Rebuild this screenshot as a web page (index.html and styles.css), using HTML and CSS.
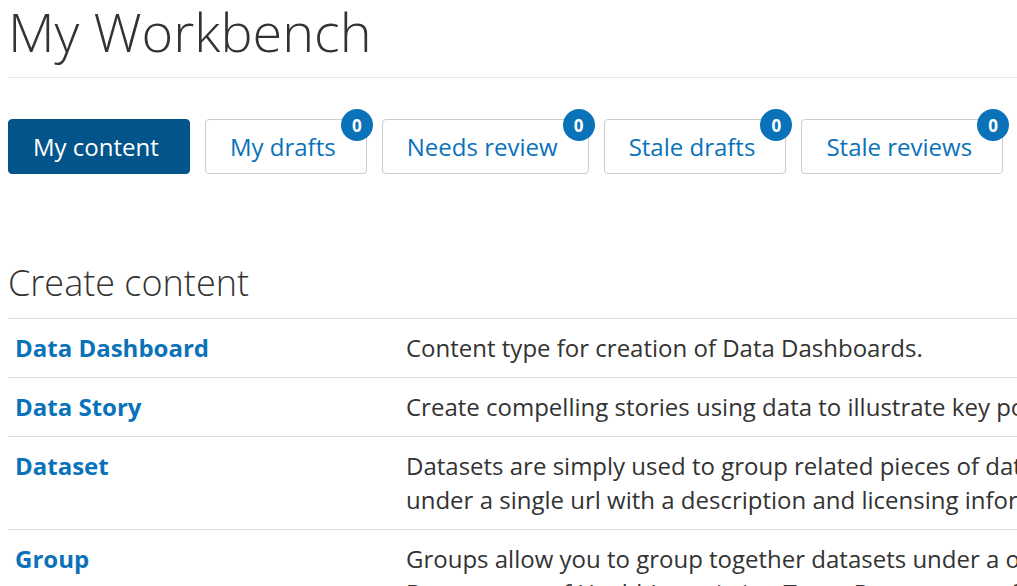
FILE: index.html
```html
<!DOCTYPE html>
<html lang="en">
<head>
<meta charset="utf-8">
<title>My Workbench</title>
<link rel="stylesheet" href="styles.css">
</head>
<body>
<div class="page">
  <h1 class="page-title">My Workbench</h1>
  <nav class="tabs">
    <a class="tab tab-active" href="#">My content</a>
    <a class="tab" href="#">My drafts<span class="badge">0</span></a>
    <a class="tab" href="#">Needs review<span class="badge">0</span></a>
    <a class="tab" href="#">Stale drafts<span class="badge">0</span></a>
    <a class="tab" href="#">Stale reviews<span class="badge">0</span></a>
  </nav>
  <h2 class="section-title">Create content</h2>
  <table class="types">
    <tbody>
      <tr>
        <td class="type-name"><a href="#">Data Dashboard</a></td>
        <td class="type-desc">Content type for creation of Data Dashboards.</td>
      </tr>
      <tr>
        <td class="type-name"><a href="#">Data Story</a></td>
        <td class="type-desc">Create compelling stories using data to illustrate key points and findings.</td>
      </tr>
      <tr>
        <td class="type-name"><a href="#">Dataset</a></td>
        <td class="type-desc">Datasets are simply used to group related pieces of data. These can be found under a single url with a description and licensing information.</td>
      </tr>
      <tr>
        <td class="type-name"><a href="#">Group</a></td>
        <td class="type-desc">Groups allow you to group together datasets under a organization (i.e. Department of Health's statistics. Texas Department of Health statistics).</td>
      </tr>
    </tbody>
  </table>
</div>
</body>
</html>
```
FILE: styles.css
```css
html, body {
  margin: 0;
  padding: 0;
  background: #ffffff;
  overflow: hidden;
}
body {
  font-family: "Open Sans", "Liberation Sans", sans-serif;
  color: #333333;
}
.page {
  padding: 0 0 0 8px;
  width: 1600px;
}
.page-title {
  margin: 0;
  font-size: 54px;
  font-weight: 300;
  line-height: 62px;
  color: #333333;
  padding-bottom: 15px;
  border-bottom: 1px solid #e8e8e8;
}
.tabs {
  display: flex;
  gap: 15px;
  margin-top: 41px;
}
.tab {
  position: relative;
  display: flex;
  align-items: center;
  height: 55px;
  box-sizing: border-box;
  padding: 0 30.1px 0 24px;
  border: 1px solid #cccccc;
  border-radius: 4px;
  font-size: 24px;
  color: #0a72b9;
  text-decoration: none;
  background: #ffffff;
}
.tab-active {
  background: #02548a;
  border-color: #02548a;
  color: #ffffff;
}
.badge {
  position: absolute;
  top: -11px;
  right: -7px;
  width: 32px;
  height: 32px;
  border-radius: 50%;
  background: #0a72b9;
  color: #ffffff;
  font-size: 17px;
  font-weight: 700;
  display: flex;
  align-items: center;
  justify-content: center;
}
.section-title {
  margin: 89px 0 0;
  font-size: 36px;
  font-weight: 300;
  line-height: 40px;
  color: #333333;
  padding-bottom: 15px;
}
.types {
  border-collapse: collapse;
  width: 1321px;
  border-top: 1px solid #dddddd;
  table-layout: fixed;
}
.types td {
  padding: 12px 8px 12px 7px;
  border-bottom: 1px solid #dddddd;
  vertical-align: top;
  font-size: 24px;
  line-height: 34px;
}
.type-name {
  width: 375px;
}
.type-name a {
  color: #0a72b9;
  font-weight: 700;
  text-decoration: none;
}
.types .type-desc {
  padding-left: 8px;
  color: #333333;
}
```
